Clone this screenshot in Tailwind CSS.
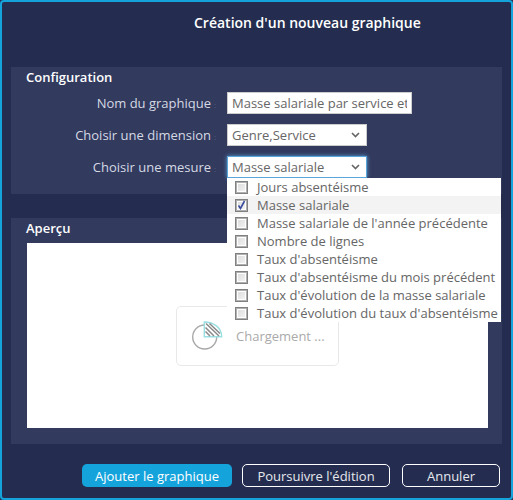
<!doctype html>
<html><head><meta charset="utf-8">
<script src="https://cdn.jsdelivr.net/npm/@tailwindcss/browser@4"></script>
</head>
<body class="m-0 bg-[#242d4f]">
<div class="relative w-[513px] h-[500px] box-border border-2 border-[#15a3dc] rounded-[4px] bg-[#242d4f] font-['Open_Sans',sans-serif] text-[13px] text-[#d5d9e4] overflow-hidden flex flex-col">
  <div class="h-[65px] pl-[192px] pt-[11px] text-[14px] leading-[19px] font-semibold text-white whitespace-nowrap">Création d'un nouveau graphique</div>
  <section class="mx-[9px] h-[127px] bg-[#323a5e] relative">
    <div class="pl-[15px] pt-[1px] font-semibold text-white leading-[18px]">Configuration</div>
    <div class="mt-[6px] flex flex-col gap-[10px]">
      <div class="flex items-center h-[22px]">
        <div class="w-[200px] text-right leading-[18px]">Nom du graphique</div>
        <div class="w-[16px] text-[8px] text-[#55607f] pl-[3px] pt-[3px]">:</div>
        <input class="w-[185px] h-[22px] box-border border border-[#ccc] bg-white px-[4px] text-[#666] text-[13px]" value="Masse salariale par service et genre">
      </div>
      <div class="flex items-center h-[22px]">
        <div class="w-[200px] text-right leading-[18px]">Choisir une dimension</div>
        <div class="w-[16px] text-[8px] text-[#55607f] pl-[3px] pt-[3px]">:</div>
        <div class="w-[140px] h-[22px] box-border border border-[#ccc] bg-white pl-[4px] pr-[6px] text-[#666] flex items-center justify-between leading-[18px]">Genre,Service
          <svg width="9" height="6" viewBox="0 0 9 6" fill="none" stroke="#666" stroke-width="1.6"><path d="M1 1l3.5 3.5L8 1"/></svg>
        </div>
      </div>
      <div class="flex items-center h-[22px]">
        <div class="w-[200px] text-right leading-[18px]">Choisir une mesure</div>
        <div class="w-[16px] text-[8px] text-[#55607f] pl-[3px] pt-[3px]">:</div>
        <div class="w-[140px] h-[22px] box-border border border-[#5aa5dc] shadow-[0_0_4px_#5aa5dc] bg-white pl-[4px] pr-[6px] text-[#666] flex items-center justify-between leading-[18px]">Masse salariale
          <svg width="9" height="6" viewBox="0 0 9 6" fill="none" stroke="#666" stroke-width="1.6"><path d="M1 1l3.5 3.5L8 1"/></svg>
        </div>
      </div>
    </div>
  </section>
  <section class="mx-[9px] mt-[24px] h-[226px] bg-[#323a5e] pl-[16px] pr-[14px]">
    <div class="pt-[1px] font-semibold text-white leading-[18px] h-[25px] -ml-px">Aperçu</div>
    <div class="relative h-[185px] bg-white">
      <div class="absolute left-[149px] top-[63px] w-[163px] h-[60px] box-border border border-[#e8e8e8] rounded-[5px] bg-white flex items-center">
        <svg class="ml-[13px]" width="34" height="36" viewBox="0 0 34 36" fill="none">
          <circle cx="14.7" cy="19" r="12" stroke="#a9a9a9" stroke-width="1.4"/>
          <path d="M14.3 4 C24 4 31.7 10 31.7 18.7 L14.3 18.7 Z" stroke="#9adfe2" stroke-width="1.4" fill="#fff"/>
          <path d="M16 5.5L29 18M15.5 9.5L24 18M19.5 5.5L30 15.5M15.5 13.5L20 18" stroke="#8a8a8a" stroke-width="1.5"/>
        </svg>
        <span class="ml-[12px] text-[#aaa] text-[13px] leading-[18px] whitespace-nowrap">Chargement ...</span>
      </div>
    </div>
  </section>
  <div class="mt-[20px] flex justify-end gap-[10px] pr-[11px] text-[13px] text-[#e6e8ee]">
    <button class="w-[150px] h-[23px] rounded-[5px] bg-[#15a3dc] text-white leading-[18px] flex items-center justify-center">Ajouter le graphique</button>
    <button class="w-[148px] h-[23px] box-border border border-white rounded-[5px] leading-[18px] flex items-center justify-center">Poursuivre l'édition</button>
    <button class="w-[98px] h-[23px] box-border border border-white rounded-[5px] ml-[2px] leading-[18px] flex items-center justify-center">Annuler</button>
  </div>
  <ul class="absolute left-[225px] top-[176px] w-[274px] h-[144px] bg-white text-[#666]">
    <li class="h-[18px] flex items-center pl-[8px] gap-[9px] whitespace-nowrap leading-[18px]"><span class="w-[13px] h-[13px] box-border border border-[#808080] shadow-[inset_0_0_0_1px_#b0b0b0,inset_0_0_0_2px_#fff] bg-linear-to-br from-[#d8d8d8] to-[#f8f8f8]"></span>Jours absentéisme</li>
    <li class="h-[18px] flex items-center pl-[8px] gap-[9px] whitespace-nowrap leading-[18px] bg-[#f3f3f3]"><span class="w-[13px] h-[13px] box-border border border-[#808080] shadow-[inset_0_0_0_1px_#b0b0b0,inset_0_0_0_2px_#fff] bg-linear-to-br from-[#d8d8d8] to-[#f8f8f8] flex items-center justify-center"><svg width="9" height="10" viewBox="0 0 9 10" fill="none" stroke="#3a4c9e" stroke-width="1.6"><path d="M1.5 5.5L3.5 8.5L7.5 1"/></svg></span>Masse salariale</li>
    <li class="h-[18px] flex items-center pl-[8px] gap-[9px] whitespace-nowrap leading-[18px]"><span class="w-[13px] h-[13px] box-border border border-[#808080] shadow-[inset_0_0_0_1px_#b0b0b0,inset_0_0_0_2px_#fff] bg-linear-to-br from-[#d8d8d8] to-[#f8f8f8]"></span>Masse salariale de l'année précédente</li>
    <li class="h-[18px] flex items-center pl-[8px] gap-[9px] whitespace-nowrap leading-[18px]"><span class="w-[13px] h-[13px] box-border border border-[#808080] shadow-[inset_0_0_0_1px_#b0b0b0,inset_0_0_0_2px_#fff] bg-linear-to-br from-[#d8d8d8] to-[#f8f8f8]"></span>Nombre de lignes</li>
    <li class="h-[18px] flex items-center pl-[8px] gap-[9px] whitespace-nowrap leading-[18px]"><span class="w-[13px] h-[13px] box-border border border-[#808080] shadow-[inset_0_0_0_1px_#b0b0b0,inset_0_0_0_2px_#fff] bg-linear-to-br from-[#d8d8d8] to-[#f8f8f8]"></span>Taux d'absentéisme</li>
    <li class="h-[18px] flex items-center pl-[8px] gap-[9px] whitespace-nowrap leading-[18px]"><span class="w-[13px] h-[13px] box-border border border-[#808080] shadow-[inset_0_0_0_1px_#b0b0b0,inset_0_0_0_2px_#fff] bg-linear-to-br from-[#d8d8d8] to-[#f8f8f8]"></span>Taux d'absentéisme du mois précédent</li>
    <li class="h-[18px] flex items-center pl-[8px] gap-[9px] whitespace-nowrap leading-[18px]"><span class="w-[13px] h-[13px] box-border border border-[#808080] shadow-[inset_0_0_0_1px_#b0b0b0,inset_0_0_0_2px_#fff] bg-linear-to-br from-[#d8d8d8] to-[#f8f8f8]"></span>Taux d'évolution de la masse salariale</li>
    <li class="h-[18px] flex items-center pl-[8px] gap-[9px] whitespace-nowrap leading-[18px]"><span class="w-[13px] h-[13px] box-border border border-[#808080] shadow-[inset_0_0_0_1px_#b0b0b0,inset_0_0_0_2px_#fff] bg-linear-to-br from-[#d8d8d8] to-[#f8f8f8]"></span>Taux d'évolution du taux d'absentéisme</li>
  </ul>
</div>
</body></html>
